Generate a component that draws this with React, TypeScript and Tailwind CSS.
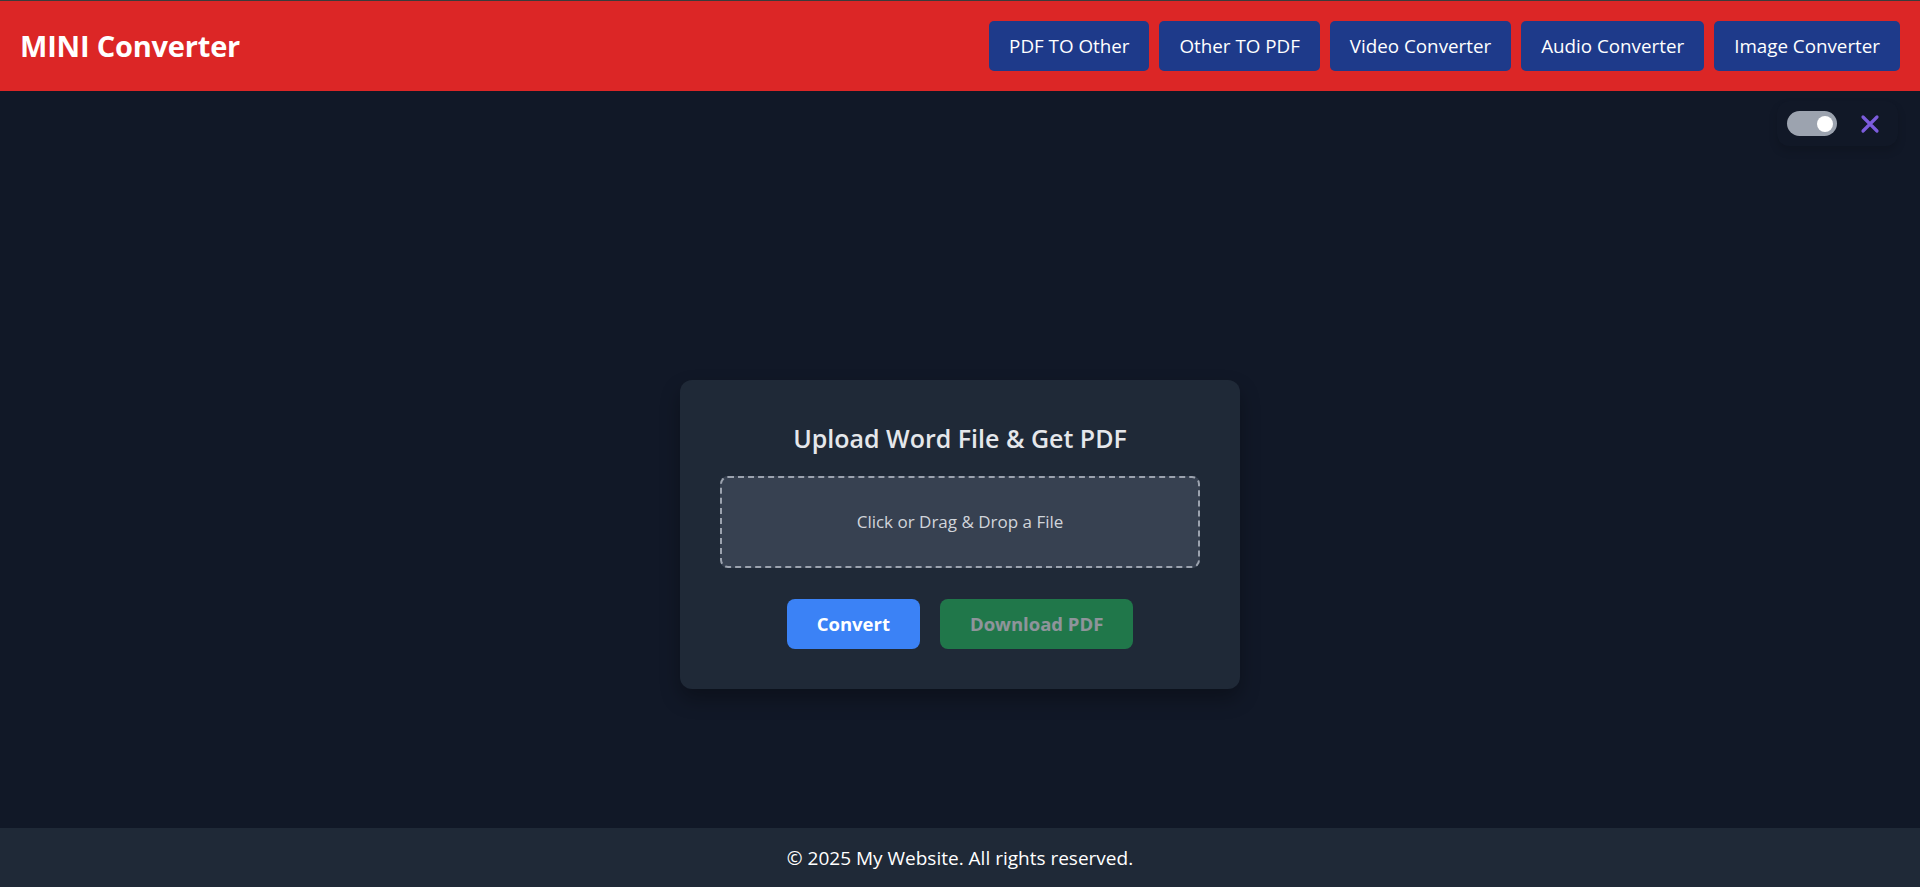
import React, { useState } from "react";

export default function App() {
  const [on, setOn] = useState(true);
  const nav = ["PDF TO Other", "Other TO PDF", "Video Converter", "Audio Converter", "Image Converter"];
  return (
    <div className="h-[887px] flex flex-col bg-[#111827] font-['Open_Sans',sans-serif] overflow-hidden">
      <div className="h-px bg-[#3b3b3b]" />
      <header className="h-[90px] shrink-0 bg-[#dc2626] flex items-center justify-between pl-5 pr-5">
        <h1 className="text-[29px] font-bold text-white tracking-[-0.2px]">MINI Converter</h1>
        <nav className="flex gap-[10px]">
          {nav.map((n) => (
            <button
              key={n}
              className="h-[50px] px-5 rounded-[5px] bg-[#1e3a8a] text-white text-[18.8px]"
            >
              {n}
            </button>
          ))}
        </nav>
      </header>
      <main className="flex-1 flex flex-col">
        <div className="flex justify-end pt-[10px] pr-[22px]">
          <div className="flex items-center gap-[23px] pl-[10px] pr-[18px] py-[10px] rounded-xl bg-[#111827] shadow-[0_5px_8px_rgba(0,0,0,0.15)]">
            <button
              onClick={() => setOn(!on)}
              className="w-[50px] h-[25px] rounded-full bg-[#9ca3af] flex items-center justify-end px-[4px]"
            >
              <span className="w-[16px] h-[16px] rounded-full bg-white" />
            </button>
            <svg width="20" height="20" viewBox="0 0 20 20" className="text-[#7c5cdc]">
              <path d="M3 3 L17 17 M17 3 L3 17" stroke="currentColor" strokeWidth="3.2" strokeLinecap="round" />
            </svg>
          </div>
        </div>
        <div className="flex justify-center pt-[234px]">
          <div className="w-[560px] p-10 rounded-xl bg-[#1f2937] shadow-[0_10px_20px_rgba(0,0,0,0.3)]">
            <h2 className="text-[25px] leading-8 font-semibold text-[#e5e7eb] text-center pt-[2px]">
              Upload Word File &amp; Get PDF
            </h2>
            <div className="mt-[22px] border-2 border-dashed border-[#9ca3af] bg-[#374151] rounded-lg py-8 text-center text-[17px] leading-6 text-[#d1d5db]">
              Click or Drag &amp; Drop a File
            </div>
            <div className="flex justify-center gap-5 mt-[31px]">
              <button className="h-[50px] px-[30px] rounded-lg bg-[#3b82f6] text-white text-[18.5px] font-bold">
                Convert
              </button>
              <button className="h-[50px] px-[30px] rounded-lg bg-[#22c55e] text-white text-[18.5px] font-bold opacity-50">
                Download PDF
              </button>
            </div>
          </div>
        </div>
      </main>
      <footer className="h-[59px] shrink-0 bg-[#1f2937] flex items-center justify-center pt-[2px]">
        <p className="text-white text-[19px]">© 2025 My Website. All rights reserved.</p>
      </footer>
    </div>
  );
}
